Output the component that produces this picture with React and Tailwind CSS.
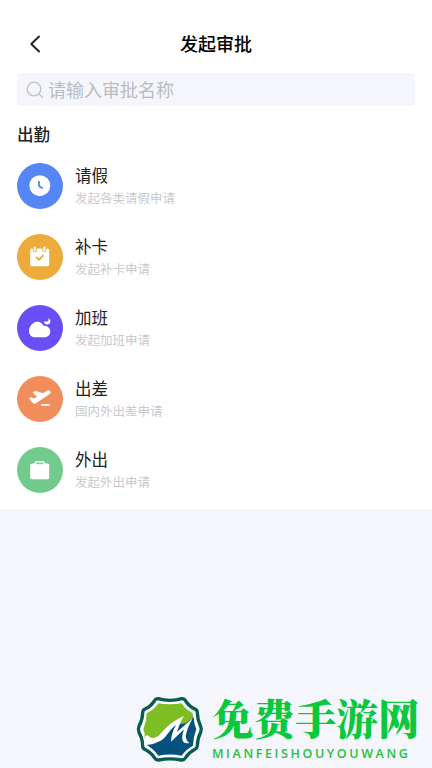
import React from 'react';

const ClockIcon = () => (
  <svg viewBox="0 0 24 24" className="w-6 h-6">
    <circle cx="11.800" cy="11.700" r="10.500" fill="#fff" />
    <path d="M10.900 7.600v3.400q0 1.400 3.200 3" fill="none" stroke="#5685f5" strokeWidth="1.900" strokeLinecap="round" />
  </svg>
);

const CalendarIcon = () => (
  <svg viewBox="0 0 24 24" className="w-6 h-6">
    <rect x="2.200" y="3.600" width="19" height="17.600" rx="1.600" fill="#fff" />
    <g fill="#fff" stroke="#ecab3a" strokeWidth="1">
      <rect x="5.200" y="1.100" width="3.200" height="5.600" rx="1.600" />
      <rect x="14.800" y="1.100" width="3.200" height="5.600" rx="1.600" />
    </g>
    <path d="M8 11.900l2.900 2.800 4.600-4.600" fill="none" stroke="#ecab3a" strokeWidth="1.700" />
  </svg>
);

const NightIcon = () => (
  <svg viewBox="0 0 24 24" className="w-6 h-6">
    <path
      d="M6.800 21.300C3.400 21.300 1 18.600 1 15.300C1 11 4.200 5.700 9.300 5.700C12.400 5.700 14.600 7.400 15.500 9.700C19.200 9.300 22.300 12 22.300 15.500C22.300 18.900 19.800 21.300 16.600 21.300Z"
      fill="#fff"
    />
    <path d="M20.600 2C21.100 3.900 20.200 5.300 18.800 5.600C17.700 5.800 16.700 5.600 16 5.300C16.100 7.500 17.600 8.800 19.500 8.600C22.500 8.200 23.800 4.300 20.600 2Z" fill="#fff" />
  </svg>
);

const PlaneIcon = () => (
  <svg viewBox="0 0 24 24" className="w-6 h-6">
    <path
      d="M1.400 11.400l1.500-.7 3.400 1 3.200-2-4.600-4.100 2.700-1.500 7 2.500 4.300-2.400c1.300-.7 2.700-.5 3.200.3.600 1-.1 2.100-1.200 2.800L8.300 15.700c-1.200.7-2.600.7-3.500 0z"
      fill="#fff"
      stroke="#fff"
      strokeWidth=".6"
      strokeLinejoin="round"
    />
    <rect x="13" y="16.900" width="9.100" height="1.900" rx=".9" fill="#fff" />
  </svg>
);

const BriefcaseIcon = () => (
  <svg viewBox="0 0 24 24" className="w-6 h-6">
    <rect x="2.200" y="5.400" width="19" height="15.900" rx="1.900" fill="#fff" />
    <path d="M6.600 5.800L8 3.700h7.400l1.400 2.100" fill="none" stroke="#fff" strokeWidth="1.400" strokeLinejoin="round" />
    <path d="M8.300 5.700h6.800" stroke="#72ca8c" strokeWidth=".8" />
  </svg>
);

const items = [
  { title: '请假', desc: '发起各类请假申请', color: 'bg-[#5685f5]', Icon: ClockIcon },
  { title: '补卡', desc: '发起补卡申请', color: 'bg-[#ecab3a]', Icon: CalendarIcon },
  { title: '加班', desc: '发起加班申请', color: 'bg-[#694ef5]', Icon: NightIcon },
  { title: '出差', desc: '国内外出差申请', color: 'bg-[#f08d5b]', Icon: PlaneIcon },
  { title: '外出', desc: '发起外出申请', color: 'bg-[#72ca8c]', Icon: BriefcaseIcon },
];

const SiteLogo = () => (
  <svg viewBox="0 0 216 216" className="w-[72px] h-[72px] shrink-0">
    <path
      d="M72 14Q90 19 108 19Q126 19 144 14Q151 14 155 21Q166 38 184 46Q190 49 190 56Q190 76 200 97Q204 106 200 115Q190 134 190 156Q189 163 183 166Q166 174 155 191Q150 199 142 198Q108 191 74 198Q66 199 61 191Q50 174 32 166Q26 163 26 156Q26 134 15 115Q11 106 15 97Q26 76 26 56Q26 49 32 46Q50 38 61 21Q65 14 72 14Z"
      fill="#fff"
      stroke="#075b53"
      strokeWidth="10"
      strokeLinejoin="round"
    />
    <path d="M73 28Q108 34 143 28Q155 47 176 57L178 73L140 115L80 145L32 132Q34 118 28 106Q38 82 38 58Q61 47 73 28Z" fill="#7fbd25" />
    <path d="M179 70Q180 90 187 106Q177 130 177 155Q157 165 143 185Q108 178 73 185Q59 165 38 153Q72 150 88 128L106 104L126 92L155 88Z" fill="#07517e" />
    <path
      d="M33 127Q41 120 47 129Q58 137 74 125C90 109 106 85 150 66Q139 82 129 114L176 73Q159 103 155 127Q156 140 166 147Q148 150 145 137Q143 125 150 106L111 143Q111 122 126 91Q107 110 94 128C76 150 48 149 36 139Z"
      fill="#fff"
    />
  </svg>
);

const App = () => {
  return (
    <div className="h-[768px] w-[432px] flex flex-col justify-between overflow-hidden bg-[#f5f6fb] font-['Noto_Sans_CJK_SC',sans-serif]">
      <div className="h-[509px] bg-white px-[17px] pt-[26px]">
        <header className="grid grid-cols-[36px_1fr_36px] items-center h-9">
          <svg viewBox="0 0 36 36" className="w-9 h-9">
            <path d="M22 10.500L14.300 18l7.700 7.500" fill="none" stroke="#222" strokeWidth="1.900" strokeLinecap="round" strokeLinejoin="round" />
          </svg>
          <h1 className="pb-0.5 text-center text-lg leading-[34px] font-medium text-black">发起审批</h1>
        </header>

        <div className="mt-[11px] flex h-[33px] items-center rounded bg-[#f5f6fb] pl-[9px]">
          <svg viewBox="0 0 18 18" className="w-[18px] h-[18px]">
            <circle cx="8" cy="8" r="6.800" fill="none" stroke="#bfc1c6" strokeWidth="1.300" />
            <path d="M13 13l3.500 3.500" stroke="#bfc1c6" strokeWidth="1.300" strokeLinecap="round" />
          </svg>
          <span className="ml-1 pb-0.5 text-lg leading-none text-[#bbbcc0]">请输入审批名称</span>
        </div>

        <h2 className="mt-4 text-[16.500px] leading-6 font-medium text-[#222]">出勤</h2>

        <ul className="mt-[17px] flex flex-col gap-[25px]">
          {items.map(({ title, desc, color, Icon }) => (
            <li key={title} className="flex h-[46px] items-center">
              <div className={`flex h-[46px] w-[46px] items-center justify-center rounded-full ${color}`}>
                <Icon />
              </div>
              <div className="ml-3 flex flex-col">
                <span className="text-[16.500px] leading-6 text-[#222]">{title}</span>
                <span className="text-[12.500px] leading-[22px] text-[#c9cacd]">{desc}</span>
              </div>
            </li>
          ))}
        </ul>
      </div>

      <footer className="flex h-[74px] items-start pl-[134px]">
        <SiteLogo />
        <div className="ml-1.5 flex flex-col whitespace-nowrap">
          <span className="font-['Noto_Serif_CJK_SC','Noto_Sans_CJK_SC',serif] text-[41.500px] leading-[47px] font-black text-[#08c83b]">
            免费手游网
          </span>
          <span className="mt-1 font-['Open_Sans',sans-serif] text-[12.500px] leading-[18px] font-semibold tracking-[2.600px] text-[#20c43c]">
            MIANFEISHOUYOUWANG
          </span>
        </div>
      </footer>
    </div>
  );
};

export default App;
